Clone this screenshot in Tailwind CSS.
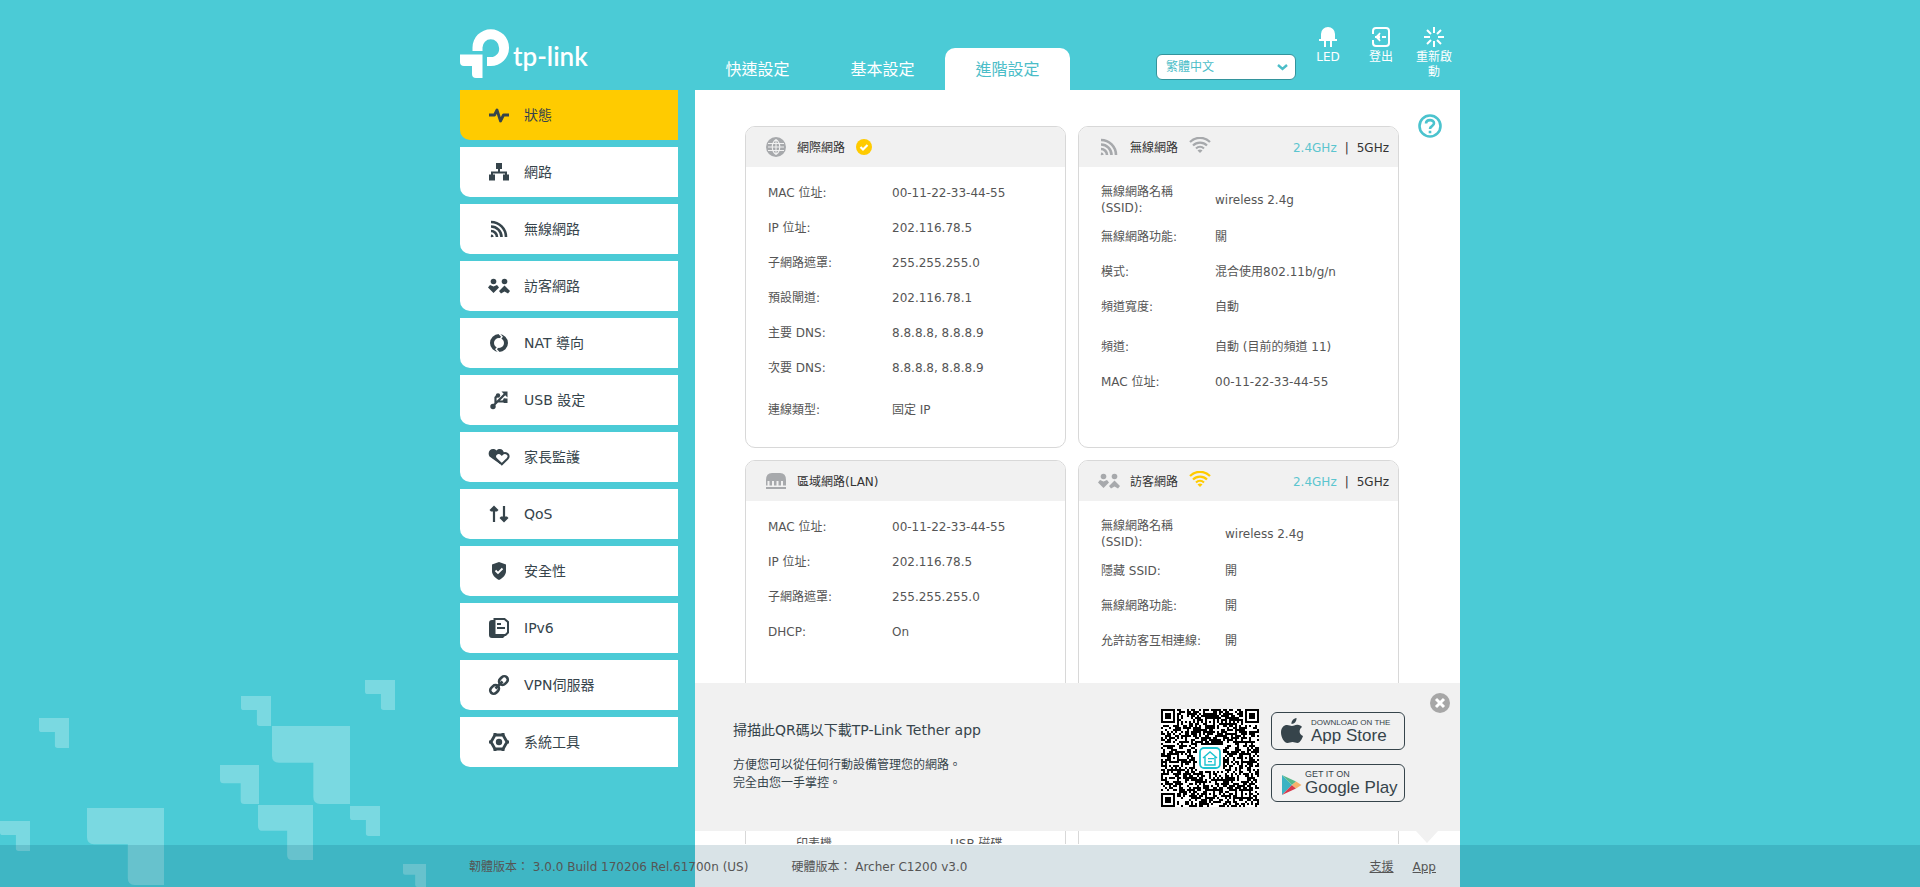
<!DOCTYPE html>
<html lang="zh-Hant">
<head>
<meta charset="utf-8">
<meta name="viewport" content="width=device-width, initial-scale=1">
<title>tp-link</title>
<script src="https://cdn.jsdelivr.net/npm/@tailwindcss/browser@4"></script>
</head>
<body class="relative h-screen overflow-hidden bg-[#4bcbd6] font-['DejaVu_Sans','Noto_Sans_CJK_TC',sans-serif] text-xs leading-4 text-[#555]">

<!-- Background decoration -->
<svg class="absolute bottom-0 left-0 h-[227px] w-[460px]" viewBox="0 0 460 227" fill="#7ad9e1" aria-hidden="true">
  <defs><path id="tile" d="M0 0H100V100H62q-9 0-9-9V47H9q-9 0-9-9Z"/></defs>
  <use href="#tile" transform="translate(39 58) scale(.3)"/>
  <use href="#tile" transform="translate(241 36) scale(.3)"/>
  <use href="#tile" transform="translate(365 20) scale(.3)"/>
  <use href="#tile" transform="translate(272 66) scale(.78)"/>
  <use href="#tile" transform="translate(220 105) scale(.39)"/>
  <use href="#tile" transform="translate(258 145) scale(.55)"/>
  <use href="#tile" transform="translate(350 146) scale(.3)"/>
  <use href="#tile" transform="translate(87 148) scale(.77)"/>
  <use href="#tile" transform="translate(0 161) scale(.3)"/>
  <use href="#tile" transform="translate(403 204) scale(.23)"/>
</svg>

<div class="relative mx-auto flex h-full max-w-[1000px] flex-col">
  <header class="flex h-[90px] shrink-0">
    <a href="#" class="flex w-[235px] items-start gap-1 pt-[29px] text-white" aria-label="tp-link">
      <svg class="size-[49px]" viewBox="0 0 49 49" fill="currentColor"><path d="M12.500 22V18.500A18.200 18.200 0 0 1 49 18.500A18.200 18.200 0 0 1 30.500 37H27V28H30.500A8 8 0 0 0 39 18.500A8 8 0 0 0 22.500 18.500V22Z"/><path d="M0 25.500H22.500V49H16a4 4 0 0 1-4-4V37H4a4 4 0 0 1-4-4Z"/></svg>
      <span class="mt-[11px] font-[Lato] text-[26px] leading-8 font-semibold">tp-link</span>
    </a>
    <nav class="flex items-end text-base">
      <a href="#" class="flex h-[42px] w-[125px] items-center justify-center pt-0.5 text-white">快速設定</a>
      <a href="#" class="flex h-[42px] w-[125px] items-center justify-center pt-0.5 text-white">基本設定</a>
      <a href="#" class="flex h-[42px] w-[125px] items-center justify-center rounded-t-[10px] bg-white pt-0.5 text-[#4bbdc8]">進階設定</a>
    </nav>
    <div class="ml-auto flex">
      <div class="relative mt-[54px] mr-[14px] h-[26px] w-[140px]">
        <label for="lang" class="sr-only">語言</label>
        <select id="lang" class="h-full w-full appearance-none rounded-md border border-[#33949c] bg-white pl-[9px] text-xs leading-6 text-[#4bbdc8]"><option>繁體中文</option></select>
        <svg class="pointer-events-none absolute top-[10px] right-2 h-[7px] w-[11px]" viewBox="0 0 11 7" fill="none" stroke="#4bbdc8" stroke-width="2.400"><path d="M1 1L5.500 5L10 1"/></svg>
      </div>
      <button class="flex w-9 flex-col items-center pt-[27px] leading-[15px] text-white">
        <svg class="mb-[3px] h-5 w-[18px] shrink-0" viewBox="0 0 18 20" fill="currentColor"><path d="M2 12V7a7 7 0 0 1 14 0v5h2v2h-5v6h-2v-6H7v6H5v-6H0v-2Z"/></svg>LED</button>
      <button class="ml-[17px] flex w-9 flex-col items-center pt-[27px] leading-[15px] text-white">
        <svg class="mb-[3px] h-5 w-[18px] shrink-0" viewBox="0 0 18 20" fill="none" stroke="currentColor" stroke-width="2"><path d="M1 7V4a3 3 0 0 1 3-3H14a3 3 0 0 1 3 3V16a3 3 0 0 1-3 3H4a3 3 0 0 1-3-3V13"/><path d="M3 10h5M10 10h4"/><path d="M8 6L4 10l4 4L6.500 10Z" fill="currentColor" stroke-width="1.200"/></svg>登出</button>
      <button class="mr-2 ml-[17px] flex w-9 flex-col items-center pt-[27px] leading-[15px] text-white">
        <svg class="mb-[3px] size-5 shrink-0" viewBox="0 0 20 20" fill="none" stroke="currentColor" stroke-width="2"><path d="M10 0v6M10 14v6M0 10h6M14 10h6M3 3l4 4M13 13l4 4M17 3l-4 4M7 13l-4 4"/></svg>重新啟動</button>
    </div>
  </header>

  <div class="flex min-h-0 flex-1 gap-[17px]">
    <nav class="flex w-[218px] shrink-0 flex-col gap-[7px] text-sm text-[#36444b]">
      <a href="#" class="flex h-[50px] items-center gap-[14px] rounded-bl-[10px] bg-[#ffcb00] pl-7"><svg class="size-[22px]" viewBox="0 0 22 22" fill="none" stroke="currentColor" stroke-width="2.800" stroke-linejoin="round"><path d="M1 11h5.500l2.500-5L12.500 17l3-6H21"/></svg>狀態</a>
      <a href="#" class="flex h-[50px] items-center gap-[14px] rounded-bl-[10px] bg-white pl-7"><svg class="size-[22px]" viewBox="0 0 22 22" fill="currentColor"><path d="M8 2h6v6h-2v2.500h7v3h2v6h-6v-6h2v-1H5v1h2v6H1v-6h2v-3h7V8H8Z"/></svg>網路</a>
      <a href="#" class="flex h-[50px] items-center gap-[14px] rounded-bl-[10px] bg-white pl-7"><svg class="size-[22px]" viewBox="0 0 22 22"><g id="rss" fill="none" stroke="currentColor" stroke-width="2.600"><path d="M3 4a15 15 0 0 1 15 15M3 8.500A10.500 10.500 0 0 1 13.500 19M3 13a6 6 0 0 1 6 6"/><path d="M3 17.500A2 2 0 0 1 4.500 19" /></g></svg>無線網路</a>
      <a href="#" class="flex h-[50px] items-center gap-[14px] rounded-bl-[10px] bg-white pl-7"><svg class="size-[22px]" viewBox="0 0 22 22"><g id="guests" fill="currentColor"><circle cx="5.500" cy="6.500" r="2.800"/><circle cx="16.500" cy="6.500" r="2.800"/><path d="M5.500 18L0 12.500l2-2.500 3.500 1.500L9 10l2 2.500ZM16.500 10.500L22 16l-2 2.500-3.500-2-3.500 2-2-2.500Z"/></g></svg>訪客網路</a>
      <a href="#" class="flex h-[50px] items-center gap-[14px] rounded-bl-[10px] bg-white pl-7"><svg class="size-[22px]" viewBox="0 0 22 22"><circle cx="11" cy="11" r="7" fill="none" stroke="currentColor" stroke-width="4"/><path d="M10.500 1l3.500 3.800L10.500 9M11.500 21l-3.500-3.800L11.500 13" fill="none" stroke="#fff" stroke-width="1.400"/></svg>NAT 導向</a>
      <a href="#" class="flex h-[50px] items-center gap-[14px] rounded-bl-[10px] bg-white pl-7"><svg class="size-[22px]" viewBox="0 0 22 22" fill="none" stroke="currentColor" stroke-width="2.200"><path d="M5 17L17 5M7.500 14.500V8.500L10 6M10 12.500h5L17.500 10"/><circle cx="5" cy="17.500" r="2.700" fill="currentColor" stroke="none"/><circle cx="10" cy="6.500" r="2.200" fill="currentColor" stroke="none"/><path d="M13.500 2.500h6v6ZM15.500 9.500h4v4.500h-4Z" fill="currentColor" stroke="none"/></svg>USB 設定</a>
      <a href="#" class="flex h-[50px] items-center gap-[14px] rounded-bl-[10px] bg-white pl-7"><svg class="size-[22px]" viewBox="0 0 22 22"><path d="M12 18L1.500 10.500C-1.500 5.500 4 .5 8.500 4.500c3-3 7.500-1 7.500 3Z" fill="currentColor"/><path d="M13.800 18.300L8 12.800C4.800 9 10 4.800 13.800 8.500 17.500 4.800 23 9 19.500 12.800Z" fill="#fff" stroke="currentColor" stroke-width="2"/></svg>家長監護</a>
      <a href="#" class="flex h-[50px] items-center gap-[14px] rounded-bl-[10px] bg-white pl-7"><svg class="size-[22px]" viewBox="0 0 22 22" fill="none" stroke="currentColor" stroke-width="2.200"><path d="M6 19V6M16 3v13"/><path d="M6 2.500l4.500 4.500-1.500 1.500H3L1.500 7ZM16 19.500l-4.500-4.500 1.500-1.500h6l1.500 1.500Z" fill="currentColor" stroke="none"/></svg>QoS</a>
      <a href="#" class="flex h-[50px] items-center gap-[14px] rounded-bl-[10px] bg-white pl-7"><svg class="size-[22px]" viewBox="0 0 22 22" fill="currentColor"><path d="M11 2l7 2.500V11c0 4-3 7-7 9-4-2-7-5-7-9V4.500Z"/><path d="M7.500 10.500l2.500 2.500 4.500-4.500" fill="none" stroke="#fff" stroke-width="1.800"/></svg>安全性</a>
      <a href="#" class="flex h-[50px] items-center gap-[14px] rounded-bl-[10px] bg-white pl-7"><svg class="size-[22px]" viewBox="0 0 22 22" fill="none" stroke="currentColor" stroke-width="2"><path d="M6 3H4a3 3 0 0 0-3 3V18a3 3 0 0 0 3 3H15l2-2H6Z" fill="currentColor" stroke="none"/><path d="M6.500 2H16.500L20 5V15.500L17.500 18H6.500Z" fill="#fff"/><path d="M9 7h4M9 11h8"/></svg>IPv6</a>
      <a href="#" class="flex h-[50px] items-center gap-[14px] rounded-bl-[10px] bg-white pl-7"><svg class="size-[22px]" viewBox="0 0 22 22" fill="none" stroke="currentColor" stroke-width="2.600"><g transform="rotate(-45 11 11)"><rect x="0" y="7.500" width="9.500" height="7" rx="3.500"/><rect x="12.500" y="7.500" width="9.500" height="7" rx="3.500"/><path d="M6 11h10"/></g></svg>VPN伺服器</a>
      <a href="#" class="flex h-[50px] items-center gap-[14px] rounded-bl-[10px] bg-white pl-7"><svg class="size-[22px]" viewBox="0 0 22 22" fill="none" stroke="currentColor"><path d="M7 4h8L19 11l-4 7H7L3 11Z" stroke-width="2.800" stroke-linejoin="round"/><circle cx="11" cy="11" r="3.200" fill="currentColor" stroke="none"/><path d="M7 2v3M15 2v3M7 17v3M15 17v3M1 11h3M18 11h3" stroke-width="3"/></svg>系統工具</a>
    </nav>

    <main class="relative min-w-0 flex-1 bg-white pb-[43px]">
      <div class="h-full overflow-hidden">
        <button class="absolute top-6 right-[18px] size-6" aria-label="說明"><svg class="size-6" viewBox="0 0 24 24" fill="none" stroke="#4bc3ce" stroke-width="2.600"><circle cx="12" cy="12" r="10.500"/><path d="M8 9.500C8 5 16 5 16 9.300c0 3-4 2.700-4 5.700M12 16.800v2.400"/></svg></button>
        <div class="grid grid-cols-2 gap-3 pt-9 pr-[61px] pl-[50px]">

          <section class="overflow-hidden rounded-[10px] border border-[#d8d8d8] pb-5">
            <div class="flex h-10 items-center bg-[#f1f1f1] pl-5 text-[#333]">
              <svg class="mr-[11px] size-5" viewBox="0 0 20 20"><circle cx="10" cy="10" r="10" fill="#a7a9ac"/><path d="M2 6.500h16M2 13.500h16M2 10h16M10 2.500v15M10 2.500C5 6 5 14 10 17.500M10 2.500c5 3.500 5 11.500 0 15" fill="none" stroke="#f1f1f1" stroke-width="1.100"/></svg><h2 class="pt-0.5">網際網路</h2>
              <svg class="ml-[11px] size-4" viewBox="0 0 16 16"><circle cx="8" cy="8" r="8" fill="#ffcb00"/><path d="M4.500 8l2.500 2.500L11.500 6" fill="none" stroke="#fff" stroke-width="2.200"/></svg>
            </div>
            <dl class="px-[22px] pt-2">
              <div class="flex h-[35px] items-center"><dt class="w-[124px]">MAC 位址:</dt><dd>00-11-22-33-44-55</dd></div>
              <div class="flex h-[35px] items-center"><dt class="w-[124px]">IP 位址:</dt><dd>202.116.78.5</dd></div>
              <div class="flex h-[35px] items-center"><dt class="w-[124px]">子網路遮罩:</dt><dd>255.255.255.0</dd></div>
              <div class="flex h-[35px] items-center"><dt class="w-[124px]">預設閘道:</dt><dd>202.116.78.1</dd></div>
              <div class="flex h-[35px] items-center"><dt class="w-[124px]">主要 DNS:</dt><dd>8.8.8.8, 8.8.8.9</dd></div>
              <div class="flex h-[35px] items-center"><dt class="w-[124px]">次要 DNS:</dt><dd>8.8.8.8, 8.8.8.9</dd></div>
              <div class="mt-[7px] flex h-[35px] items-center"><dt class="w-[124px]">連線類型:</dt><dd>固定 IP</dd></div>
            </dl>
          </section>

          <section class="overflow-hidden rounded-[10px] border border-[#d8d8d8]">
            <div class="flex h-10 items-center bg-[#f1f1f1] pr-[9px] pl-[19px] text-[#333]">
              <svg class="mr-2.5 size-[22px] text-[#a7a9ac]" viewBox="0 0 22 22"><use href="#rss"/></svg><h2 class="pt-0.5">無線網路</h2>
              <svg class="mb-1 ml-[11px] h-4 w-[22px] text-[#a7a9ac]" viewBox="0 0 22 16"><g id="wifi" fill="none" stroke="currentColor" stroke-width="2.200"><path d="M1 5a14 14 0 0 1 20 0M4 8.500a10 10 0 0 1 14 0M7 11.500a6 6 0 0 1 8 0"/><path d="M8.500 13.500a4 4 0 0 1 5 0L11 16Z" fill="currentColor" stroke="none"/></g></svg>
              <a href="#" class="ml-auto pt-0.5 text-[#5bc5cf]">2.4GHz</a><span class="mx-2 pt-0.5">|</span><a href="#" class="pt-0.5">5GHz</a>
            </div>
            <dl class="px-[22px] pt-[14px]">
              <div class="flex h-[38px] items-center"><dt class="w-[114px] pr-8">無線網路名稱(SSID):</dt><dd>wireless 2.4g</dd></div>
              <div class="flex h-[35px] items-center"><dt class="w-[114px]">無線網路功能:</dt><dd>關</dd></div>
              <div class="flex h-[35px] items-center"><dt class="w-[114px]">模式:</dt><dd>混合使用802.11b/g/n</dd></div>
              <div class="flex h-[35px] items-center"><dt class="w-[114px]">頻道寬度:</dt><dd>自動</dd></div>
              <div class="mt-[5px] flex h-[35px] items-center"><dt class="w-[114px]">頻道:</dt><dd>自動 (目前的頻道 11)</dd></div>
              <div class="flex h-[35px] items-center"><dt class="w-[114px]">MAC 位址:</dt><dd>00-11-22-33-44-55</dd></div>
            </dl>
          </section>

          <section class="overflow-hidden rounded-[10px] border border-[#d8d8d8]">
            <div class="flex h-10 items-center bg-[#f1f1f1] pl-5 text-[#333]">
              <svg class="mr-[11px] h-4 w-5" viewBox="0 0 20 16"><path d="M0 12.500V7Q0 0 6 0h8q6 0 6 7v5.500h-3V8h-2v4.500h-2.500V8h-2v4.500H8V8H6v4.500H3.500V8h-2v4.500ZM0 14h20v2H0Z" fill="#a7a9ac"/></svg><h2 class="pt-0.5">區域網路(LAN)</h2>
            </div>
            <dl class="px-[22px] pt-2">
              <div class="flex h-[35px] items-center"><dt class="w-[124px]">MAC 位址:</dt><dd>00-11-22-33-44-55</dd></div>
              <div class="flex h-[35px] items-center"><dt class="w-[124px]">IP 位址:</dt><dd>202.116.78.5</dd></div>
              <div class="flex h-[35px] items-center"><dt class="w-[124px]">子網路遮罩:</dt><dd>255.255.255.0</dd></div>
              <div class="flex h-[35px] items-center"><dt class="w-[124px]">DHCP:</dt><dd>On</dd></div>
            </dl>
          </section>

          <section class="overflow-hidden rounded-[10px] border border-[#d8d8d8] pb-[100px]">
            <div class="flex h-10 items-center bg-[#f1f1f1] pr-[9px] pl-[19px] text-[#333]">
              <svg class="mr-2.5 size-[22px] text-[#a7a9ac]" viewBox="0 0 22 22"><use href="#guests"/></svg><h2 class="pt-0.5">訪客網路</h2>
              <svg class="mb-1 ml-[11px] h-4 w-[22px] text-[#ffcb00]" viewBox="0 0 22 16"><use href="#wifi"/></svg>
              <a href="#" class="ml-auto pt-0.5 text-[#5bc5cf]">2.4GHz</a><span class="mx-2 pt-0.5">|</span><a href="#" class="pt-0.5">5GHz</a>
            </div>
            <dl class="px-[22px] pt-[14px]">
              <div class="flex h-[38px] items-center"><dt class="w-[124px] pr-10">無線網路名稱(SSID):</dt><dd>wireless 2.4g</dd></div>
              <div class="flex h-[35px] items-center"><dt class="w-[124px]">隱藏 SSID:</dt><dd>開</dd></div>
              <div class="flex h-[35px] items-center"><dt class="w-[124px]">無線網路功能:</dt><dd>開</dd></div>
              <div class="flex h-[35px] items-center"><dt class="w-[124px]">允許訪客互相連線:</dt><dd>開</dd></div>
            </dl>
          </section>

          <section class="h-[200px] overflow-hidden rounded-[10px] border border-[#d8d8d8]">
            <div class="h-10 bg-[#f1f1f1]"></div>
            <div class="flex px-[50px] pt-6"><span class="w-[154px]">印表機</span><span>USB 磁碟</span></div>
          </section>
          <section class="h-[200px] overflow-hidden rounded-[10px] border border-[#d8d8d8]">
            <div class="h-10 bg-[#f1f1f1]"></div>
          </section>
        </div>
      </div>

      <!-- Tether app banner, floats above the cards -->
      <aside class="absolute inset-x-0 bottom-14 flex h-[148px] items-start bg-[#f1f1f1] pt-[26px] pr-[55px] pl-[38px] text-[#36444b]">
        <div class="pt-[11px]">
          <h2 class="text-sm leading-5">掃描此QR碼以下載TP-Link Tether app</h2>
          <p class="mt-4 leading-[18px]">方便您可以從任何行動設備管理您的網路。<br>完全由您一手掌控。</p>
        </div>
        <svg id="qr" class="ml-auto size-[98px] shrink-0 bg-white" viewBox="0 0 49 49" shape-rendering="crispEdges" role="img" aria-label="QR">
          <path id="qr-modules" fill="#000"/>
          <rect x="18" y="18" width="13" height="13" fill="#fff"/>
          <g shape-rendering="geometricPrecision" fill="none" stroke="#1fc4d0"><rect x="19.500" y="19.500" width="10" height="10" rx="2" stroke-width=".9"/><path d="M21 24.500L24.500 21.500L28 24.500M22 24v4h5v-4M23.500 24.800h3M23.500 26.300h2" stroke-width=".7"/></g>
        </svg>
        <div class="ml-3 flex w-[134px] shrink-0 flex-col gap-[14px] pt-[3px] font-['Liberation_Sans',sans-serif]">
          <a href="#" class="flex h-[38px] items-center gap-2 rounded-md border border-[#36444b] pl-[9px]">
            <svg class="h-[26px] w-[22px]" viewBox="0 0 22 26" fill="currentColor"><path d="M15.500 0c.3 3-2 6-5 6C10.200 3 12.500.5 15.500 0ZM21 9c-3.500 2.500-3 7.500 1 9-1 3.500-3.500 7-5.500 7s-3-1-5-1-3 1-5 1C3 25 0 19 0 14.500 0 9.500 3 7 6 7c2 0 3.500 1 5 1s3-1.500 5.500-1.300c2 .1 3.500.9 4.500 2.300Z"/></svg>
            <span class="flex flex-col"><span class="text-[8px] leading-[9px]">DOWNLOAD ON THE</span><span class="text-[17px] leading-[18px]">App Store</span></span>
          </a>
          <a href="#" class="flex h-[38px] items-center gap-[3px] rounded-md border border-[#36444b] pl-[9px]">
            <svg class="mt-1 h-5 w-[21px]" viewBox="0 0 21 20"><path d="M1 0L11 10L1 20Z" fill="#3bb3c3"/><path d="M1 0L15 6.500L11 10Z" fill="#59b98a"/><path d="M1 20L15 13.500L11 10Z" fill="#d8394c"/><path d="M15 6.500L20.500 10L15 13.500L11 10Z" fill="#f6b26b"/></svg>
            <span class="flex flex-col"><span class="text-[9px] leading-[9px]">GET IT ON</span><span class="text-[17px] leading-[18px]">Google Play</span></span>
          </a>
        </div>
        <button class="absolute top-2.5 right-2.5" aria-label="關閉"><svg class="size-5" viewBox="0 0 20 20"><circle cx="10" cy="10" r="10" fill="#a7a7a7"/><path d="M6 6l8 8M14 6l-8 8" stroke="#fff" stroke-width="3"/></svg></button>
        <svg class="absolute top-full right-[22px] h-3 w-[22px]" viewBox="0 0 22 12" fill="#f1f1f1"><path d="M0 0H22L11 12Z"/></svg>
      </aside>
    </main>
  </div>
</div>

<footer class="absolute inset-x-0 bottom-0 h-[42px] bg-[#00445f]/15 px-4">
  <div class="mx-auto flex h-full max-w-[1000px] items-center pt-0.5 pr-6 pl-[9px]">
    <span>韌體版本： 3.0.0 Build 170206 Rel.61700n (US)</span>
    <span class="ml-[43px]">硬體版本： Archer C1200 v3.0</span>
    <a href="#" class="ml-auto underline">支援</a>
    <a href="#" class="ml-[19px] underline">App</a>
  </div>
</footer>

<script>
  // Version 8 code: 49 modules with finder and alignment patterns
  const n = 49, grid = [];
  let seed = 20170206;
  const rnd = () => (seed = (seed * 1103515245 + 12345) % 2147483648) / 2147483648;
  for (let y = 0; y < n; y++) { grid.push([]); for (let x = 0; x < n; x++) grid[y].push(rnd() < 0.54); }
  for (let i = 8; i < n - 8; i++) grid[6][i] = grid[i][6] = i % 2 === 0;
  const square = (cx, cy, r, off) => {
    for (let y = -r; y <= r; y++) for (let x = -r; x <= r; x++) {
      if (!grid[cy + y] || cx + x < 0 || cx + x >= n) continue;
      grid[cy + y][cx + x] = !off.includes(Math.max(Math.abs(x), Math.abs(y)));
    }
  };
  [[3, 3], [45, 3], [3, 45]].forEach(([x, y]) => square(x, y, 4, [2, 4]));
  [[24, 6], [6, 24], [42, 24], [24, 42], [42, 42]].forEach(([x, y]) => square(x, y, 2, [1]));
  document.getElementById('qr-modules').setAttribute('d',
    grid.map((row, y) => row.map((on, x) => on ? `M${x} ${y}h1v1h-1z` : '').join('')).join(''));
</script>
</body>
</html>
